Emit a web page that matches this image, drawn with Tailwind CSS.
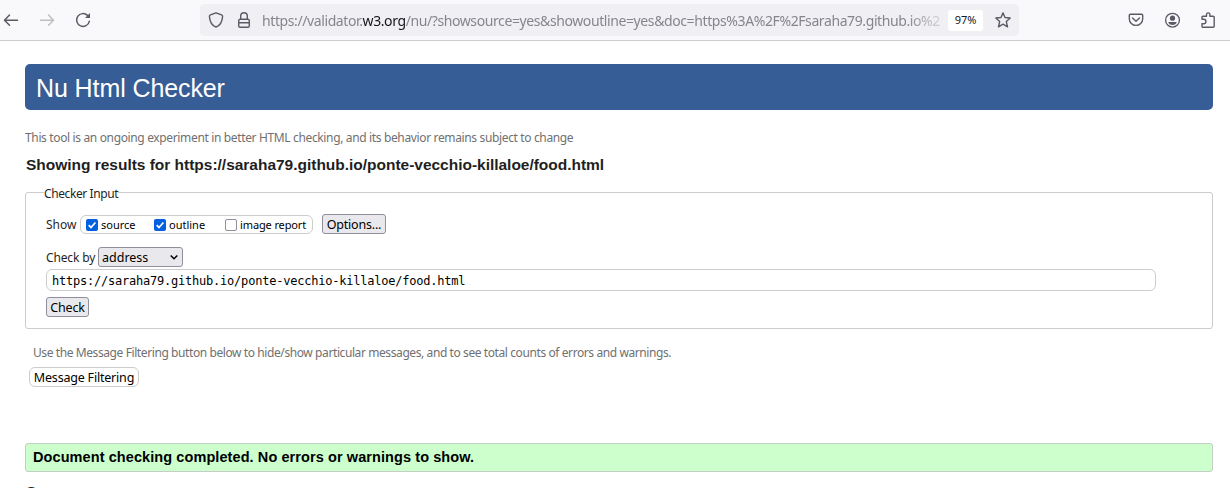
<!DOCTYPE html>
<html lang="en">
<head>
<meta charset="utf-8">
<title>Nu Html Checker</title>
<script src="https://cdn.jsdelivr.net/npm/@tailwindcss/browser@4"></script>
</head>
<body class="h-[488px] overflow-hidden bg-white font-['Noto_Sans',sans-serif] text-[12px] text-[#1f1f1f] whitespace-nowrap">
<header class="flex h-[41px] items-center border-b border-[#cccccc] bg-[#f9f9fb] text-[#5b5b66]">
  <div class="flex w-[200px] items-center pl-[3px]">
    <svg class="h-4 w-4" viewBox="0 0 16 16" fill="none" stroke="currentColor" stroke-width="1.5" stroke-linecap="round" stroke-linejoin="round"><path d="M14.5 8.2H1.8M6.5 3L1.5 8.2l5 5"/></svg>
    <svg class="ml-5 h-4 w-4 text-[#bdbdc3]" viewBox="0 0 16 16" fill="none" stroke="currentColor" stroke-width="1.5" stroke-linecap="round" stroke-linejoin="round"><path d="M1.5 8.2h12.7M9.5 3l5 5.2-5 5"/></svg>
    <svg class="ml-5 h-4 w-4" viewBox="0 0 16 16" fill="none" stroke="currentColor" stroke-width="1.5" stroke-linecap="round"><path d="M14.3 9.3A6.4 6.4 0 1 1 12.5 3.4"/><path d="M15 1v5H10z" fill="currentColor" stroke="none"/></svg>
  </div>
  <div class="flex h-8 w-[819px] items-center rounded bg-[#f0f0f4] pl-2">
    <svg class="h-4 w-4" viewBox="0 0 16 16" fill="none" stroke="currentColor" stroke-width="1.4" stroke-linejoin="round"><path d="M8 .8l5.600 2.100c.7.3 1.100.8 1 1.500-.3 5.200-2.500 9-6.600 10.800C3.900 13.400 1.700 9.600 1.400 4.400c-.1-.7.3-1.200 1-1.500z"/></svg>
    <svg class="ml-3 h-4 w-4" viewBox="0 0 16 16" fill="none" stroke="currentColor" stroke-width="1.4"><rect x="2.700" y="7.200" width="10.600" height="8" rx="1.500"/><path d="M4.700 7V4.100a3.300 3.300 0 0 1 6.600 0V7M3 10.700h10"/></svg>
    <div class="ml-[10px] w-[680px] overflow-hidden pt-[2px] text-[14px] leading-[30px] tracking-[-0.4px] text-[#85858c] [mask-image:linear-gradient(to_right,black_645px,transparent_690px)]">https://validator.<span class="text-[#15141a]">w3.org</span>/nu/?showsource=yes&amp;showoutline=yes&amp;doc=https%3A%2F%2Fsaraha79.github.io%2</div>
    <div class="ml-[6px] flex h-[21px] w-[35px] items-center justify-center rounded-[3px] bg-white pt-px text-[11px] text-[#15141a]">97%</div>
    <svg class="ml-3 h-4 w-4" viewBox="0 0 16 16" fill="none" stroke="currentColor" stroke-width="1.4" stroke-linejoin="round"><path d="M8 .9l2 4.600 5.200.5-3.900 3.500 1.200 5.300L8 12.100l-4.500 2.700 1.200-5.300L.8 6l5.200-.5z"/></svg>
  </div>
  <svg class="ml-[109px] h-4 w-4" viewBox="0 0 16 16" fill="none" stroke="currentColor" stroke-width="1.4" stroke-linecap="round" stroke-linejoin="round"><path d="M2.500 2.200h11a1.200 1.200 0 0 1 1.200 1.200v3.300a6.700 6.700 0 0 1-13.400 0V3.400a1.200 1.200 0 0 1 1.200-1.200zM4.500 6L8 9.300 11.500 6"/></svg>
  <svg class="ml-5 h-4 w-4" viewBox="0 0 16 16"><circle cx="8.500" cy="8.200" r="6.900" fill="none" stroke="currentColor" stroke-width="1.3"/><circle cx="8.500" cy="6.200" r="2.600" fill="currentColor"/><path d="M4.200 10h8.600c-.5 1.900-2.200 3-4.300 3s-3.800-1.100-4.300-3z" fill="currentColor"/></svg>
  <svg class="ml-5 h-4 w-4" viewBox="0 0 16 16" fill="none" stroke="currentColor" stroke-width="1.4" stroke-linejoin="round"><path d="M2 7.200V5.200a1 1 0 0 1 1-1h3.500V2.600a1.700 1.700 0 0 1 3.400 0v1.600h3.300a1 1 0 0 1 1 1v9a1 1 0 0 1-1 1H3a1 1 0 0 1-1-1v-2.500h1.700a2.200 2.200 0 0 0 0-4.500z"/></svg>
</header>
<main class="pl-[25px] pr-[17px] pt-[23px]">
  <h1 class="h-[46px] rounded-[5px] bg-[#365d95] pl-[11px] font-['Liberation_Sans',sans-serif] text-[25px] leading-[48px] tracking-[-0.1px] text-white">Nu Html Checker</h1>
  <p class="mt-[18px] h-[18px] leading-[19px] tracking-[-0.355px] text-[#707070]">This tool is an ongoing experiment in better HTML checking, and its behavior remains subject to change</p>
  <h2 class="mt-[9px] h-5 pl-px font-['Liberation_Sans',sans-serif] text-[15.500px] font-bold leading-5 tracking-[-0.018px]">Showing results for https://saraha79.github.io/ponte-vecchio-killaloe/food.html</h2>
  <fieldset class="mt-[8px] h-[146px] rounded-[3px] border border-[#cccccc] pl-5">
    <legend class="-ml-[2px] h-[18px] pt-[4px] leading-[14px] tracking-[-0.4px]">Checker Input</legend>
    <div class="mt-[12px] flex h-[22px] items-center">
      <span class="w-[34px] pt-px">Show</span>
      <div class="mb-px flex h-[19px] w-[233px] items-center self-end rounded-[6px] border border-[#cccccc] pl-[5px] text-[11px] text-black">
        <svg class="mr-[3px] h-3 w-3" viewBox="0 0 12 12"><rect width="12" height="12" rx="2" fill="#0060df"/><path d="M2.700 6.100l2.300 2.400 4.400-5" fill="none" stroke="#fff" stroke-width="1.700"/></svg><span class="w-[53px] pt-px">source</span>
        <svg class="mr-[3px] h-3 w-3" viewBox="0 0 12 12"><rect width="12" height="12" rx="2" fill="#0060df"/><path d="M2.700 6.100l2.300 2.400 4.400-5" fill="none" stroke="#fff" stroke-width="1.700"/></svg><span class="w-[56px] pt-px">outline</span>
        <span class="mr-[3px] h-3 w-3 rounded-[2px] border border-[#8f8f9d]"></span><span class="pt-px tracking-[-0.12px]">image report</span>
      </div>
      <button class="ml-[9px] h-5 w-16 rounded-[3px] border border-[#8f8f9d] bg-[#e9e9ed] text-[12.500px] leading-[19px] tracking-[-0.2px] text-black">Options...</button>
    </div>
    <div class="mt-[12px] flex h-5 items-center">
      <span class="w-[52px] pt-px tracking-[-0.15px]">Check by</span>
      <div class="flex h-5 w-[85px] items-center rounded-[3px] border border-[#8f8f9d] bg-[#e9e9ed] pl-[3px] text-[12.500px] leading-[18px] text-black"><span class="w-[68px] pt-px">address</span><svg class="h-2 w-2" viewBox="0 0 8 8" fill="none" stroke="currentColor" stroke-width="1.500"><path d="M.7 2.500L4 5.800l3.300-3.300"/></svg></div>
    </div>
    <div class="mt-[2px] h-[22px] w-[1110px] rounded-[6px] border border-[#cccccc] pl-[5px] font-['DejaVu_Sans_Mono',monospace] text-[12px] leading-[22px] tracking-[-0.22px] text-black">https://saraha79.github.io/ponte-vecchio-killaloe/food.html</div>
    <button class="mt-[6px] block h-5 w-[43px] rounded-[3px] border border-[#8f8f9d] bg-[#e9e9ed] text-[12.500px] leading-[19px] tracking-[-0.2px] text-black">Check</button>
  </fieldset>
  <p class="mt-[14px] h-[18px] pl-2 leading-[19px] tracking-[-0.408px] text-[#707070]">Use the Message Filtering button below to hide/show particular messages, and to see total counts of errors and warnings.</p>
  <button class="ml-1 mt-[6px] block h-5 w-[110px] rounded-[6px] border border-[#cccccc] bg-white text-[12.500px] leading-[19px] tracking-[-0.2px] text-black">Message Filtering</button>
  <p class="mt-14 h-[29px] rounded-[3px] border border-[#c4cec4] bg-[#ccffcc] pl-[7px] font-['Liberation_Sans',sans-serif] text-[14.500px] font-bold leading-[27px] tracking-[0.085px] text-black">Document checking completed. No errors or warnings to show.</p>
  <h3 class="mt-[10px] pl-px font-['Liberation_Sans',sans-serif] text-[15.500px] font-bold leading-5">Source</h3>
</main>
</body>
</html>
